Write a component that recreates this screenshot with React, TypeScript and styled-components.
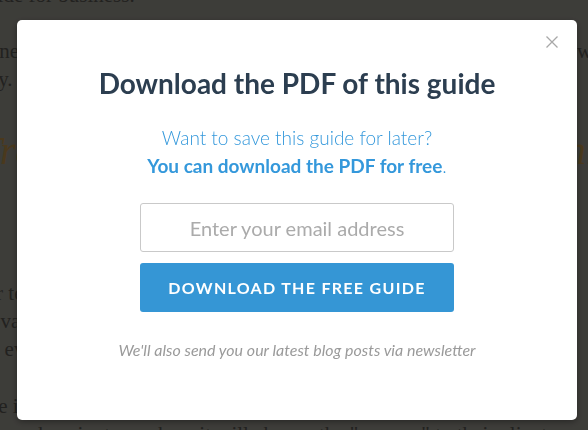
import React from "react";
import styled, { createGlobalStyle } from "styled-components";

const Global = createGlobalStyle`
  html, body { margin: 0; padding: 0; }
  body {
    width: 588px;
    height: 430px;
    overflow: hidden;
    background: #9a9890;
  }
  #root { height: 100%; }
`;

const Page = styled.div`
  height: 430px;
  overflow: hidden;
  background: #9a9890;
  font-family: "Liberation Serif", "DejaVu Serif", serif;
  color: #55544f;
`;

const Article = styled.article`
  width: 700px;
  margin-left: -38px;
  margin-top: -19px;
`;

const Para = styled.p<{ $gap?: number }>`
  margin: 0 0 ${(p) => p.$gap ?? 28}px 0;
  font-size: 21px;
  line-height: 28px;
`;

const Line = styled.span`
  display: block;
  white-space: nowrap;
`;

const Heading = styled.h2`
  margin: 0 0 104px 18px;
  font-size: 40px;
  line-height: 48px;
  font-style: italic;
  font-weight: 400;
  color: #b8904a;
  white-space: nowrap;
`;

const Overlay = styled.div`
  position: fixed;
  inset: 0;
  background: rgba(0, 0, 0, 0.6);
  display: flex;
  justify-content: flex-start;
  align-items: flex-start;
  padding: 20px 0 0 17px;
  box-sizing: border-box;
`;

const Modal = styled.div`
  position: relative;
  width: 560px;
  height: 400px;
  background: #fff;
  border-radius: 5px;
  box-shadow: 0 2px 6px rgba(0, 0, 0, 0.35);
  display: flex;
  flex-direction: column;
  align-items: center;
  box-sizing: border-box;
  padding-top: 46px;
  font-family: Lato, "Open Sans", sans-serif;
`;

const Close = styled.button`
  position: absolute;
  top: 16px;
  right: 19px;
  width: 12px;
  height: 12px;
  padding: 0;
  border: 0;
  background: none;
  display: flex;
  cursor: pointer;
`;

const Title = styled.h1`
  margin: 0;
  font-size: 28px;
  line-height: 34px;
  font-weight: 700;
  color: #2c3e50;
  letter-spacing: 0;
`;

const Lead = styled.p`
  margin: 24px 0 0 0;
  text-align: center;
  font-size: 19px;
  line-height: 28px;
  color: #3498db;
  font-weight: 300;
`;

const Strong = styled.strong`
  font-weight: 700;
`;

const Form = styled.form`
  margin-top: 23px;
  display: flex;
  flex-direction: column;
  gap: 11px;
  width: 314px;
`;

const Email = styled.input`
  box-sizing: border-box;
  width: 100%;
  height: 49px;
  border: 1px solid #c9c9c9;
  border-radius: 3px;
  font-family: Lato, sans-serif;
  font-size: 20px;
  font-weight: 400;
  text-align: center;
  color: #333;
  outline: none;
  &::placeholder {
    color: #ababab;
  }
`;

const Submit = styled.button`
  box-sizing: border-box;
  width: 100%;
  height: 49px;
  border: 0;
  border-radius: 3px;
  background: #3596d5;
  color: #fff;
  font-family: Lato, sans-serif;
  font-size: 16px;
  font-weight: 700;
  letter-spacing: 1.3px;
  text-transform: uppercase;
  cursor: pointer;
`;

const Note = styled.p`
  margin: 28px 0 0 0;
  font-size: 16px;
  line-height: 20px;
  font-style: italic;
  font-weight: 400;
  color: #9a9a9a;
`;

export default function App() {
  return (
    <>
      <Global />
      <Page>
        <Article>
          <Para>
            <Line>a guide for business.</Line>
          </Para>
          <Para $gap={34}>
            <Line>
              Online marketing is changing quickly, and we think getting started is the way
            </Line>
            <Line>ready.</Line>
          </Para>
          <Heading>Transform your workflow with this online guide for everyone</Heading>
          <Para $gap={29}>
            <Line>Your team can use a single inbox to collaborate and share a box of ideas</Line>
            <Line>Innovation without the hassle, so work gets done with the right people</Line>
            <Line>with every customer.</Line>
          </Para>
          <Para>
            <Line>More importantly, every team member can see what's the record of every</Line>
            <Line>again and again, to see how it will change the "process" to their clients</Line>
          </Para>
        </Article>
      </Page>
      <Overlay>
        <Modal role="dialog" aria-label="Download the PDF of this guide">
          <Close aria-label="Close">
            <svg width="12" height="12" viewBox="0 0 12 12">
              <path
                d="M0.5 0.5 L11.5 11.5 M11.5 0.5 L0.5 11.5"
                stroke="#a8a8a8"
                strokeWidth="1.3"
                fill="none"
              />
            </svg>
          </Close>
          <Title>Download the PDF of this guide</Title>
          <Lead>
            Want to save this guide for later?
            <br />
            <Strong>You can download the PDF for free</Strong>.
          </Lead>
          <Form onSubmit={(e) => e.preventDefault()}>
            <Email type="email" placeholder="Enter your email address" />
            <Submit type="submit">Download the free guide</Submit>
          </Form>
          <Note>We'll also send you our latest blog posts via newsletter</Note>
        </Modal>
      </Overlay>
    </>
  );
}
